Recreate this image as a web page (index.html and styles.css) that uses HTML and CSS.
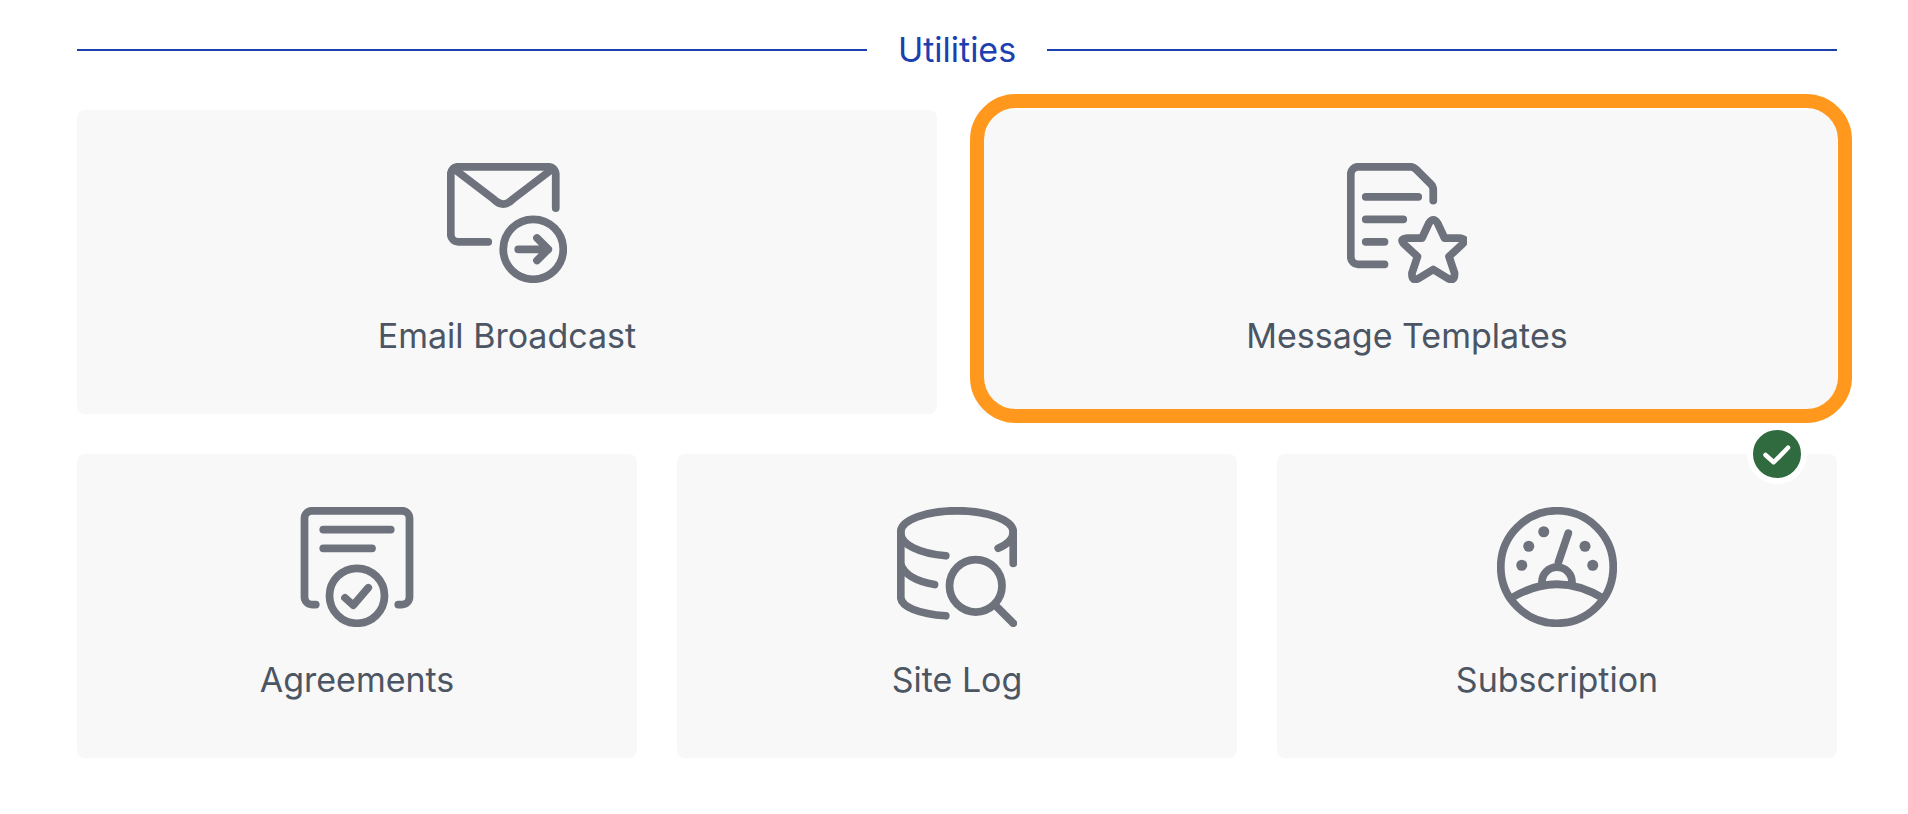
FILE: index.html
```html
<!DOCTYPE html>
<html lang="en">
<head>
    <meta charset="UTF-8">
    <meta name="viewport" content="width=device-width, initial-scale=1.0">
    <title>Utilities</title>
    <link rel="stylesheet" href="styles.css">
</head>
<body>
    <div class="container">
        <div class="section-title">
            <span class="section-line"></span>
            <h2>Utilities</h2>
            <span class="section-line"></span>
        </div>

        <div class="card-row">
            <!-- Email Broadcast -->
            <div class="card">
                <svg class="card-icon" viewBox="0 0 24 24">
                    <path d="M8.25 15.75H2.25A1.5 1.5 0 0 1 .75 14.25V2.25A1.5 1.5 0 0 1 2.25 .75H20.25A1.5 1.5 0 0 1 21.75 2.25V9"/>
                    <path d="M1.3 1.1L9.3 7.2Q11.25 9.2 13.2 7.2L21.2 1.1"/>
                    <circle cx="17.25" cy="17.25" r="6"/>
                    <path d="M14.25 17.25H20.25M18 15L20.25 17.25L18 19.5"/>
                </svg>
                <span class="card-label">Email Broadcast</span>
            </div>

            <!-- Message Templates -->
            <div class="card">
                <svg class="card-icon" viewBox="0 0 24 24">
                    <path d="M7.5 20.25H2.25A1.5 1.5 0 0 1 .75 18.75V2.25A1.5 1.5 0 0 1 2.25 .75H12.7Q13.3 .75 13.8 1.25L16.8 4.25Q17.25 4.7 17.25 5.4V7.5"/>
                    <path d="M3.75 6.75H14.25M3.75 11.25H11.25M3.75 15.75H7.5"/>
                    <path d="M16.4 12Q17.25 10.7 18.1 12L19.5 15H22.4Q24.2 15.1 23 16.3L20.4 18.7L21.5 22Q21.6 23.8 20.2 23.1L17.25 21.3L14.3 23.1Q12.9 23.8 13 22L14.1 18.7L11.5 16.3Q10.3 15.1 12.1 15H15Z"/>
                </svg>
                <span class="card-label">Message Templates</span>
                <span class="card-highlight"></span>
            </div>
        </div>

        <div class="card-row">
            <!-- Agreements -->
            <div class="card">
                <svg class="card-icon" viewBox="0 0 24 24">
                    <path d="M3.75 19.5H3A1.5 1.5 0 0 1 1.5 18V2.25A1.5 1.5 0 0 1 3 .75H21A1.5 1.5 0 0 1 22.5 2.25V18A1.5 1.5 0 0 1 21 19.5H20.25"/>
                    <path d="M5.25 4.5H18.75M5.25 8.25H15"/>
                    <circle cx="12" cy="17.75" r="5.5"/>
                    <path d="M9.6 18.15L11.25 19.65L14.25 16.15"/>
                </svg>
                <span class="card-label">Agreements</span>
            </div>

            <!-- Site Log -->
            <div class="card">
                <svg class="card-icon" viewBox="0 0 24 24">
                    <path d="M20.25 8.25C22 7.5 23.25 6.4 23.25 5C23.25 2.6 18.2 .75 12 .75S.75 2.6 .75 5V18C.75 20 4.5 21.4 9.75 21.75"/>
                    <path d="M23.25 5V11.25"/>
                    <path d="M.75 5.25C.75 7.5 4.5 9.3 9.75 9.75M.75 11.5C1.5 13.5 4 14.9 7.5 15.5"/>
                    <circle cx="15.75" cy="15.75" r="5.25"/>
                    <path d="M19.5 19.5L23.25 23.25"/>
                </svg>
                <span class="card-label">Site Log</span>
            </div>

            <!-- Subscription -->
            <div class="card">
                <svg class="card-icon" viewBox="0 0 24 24">
                    <circle cx="12" cy="12" r="11.25"/>
                    <path d="M2.7 18.3Q12 12.6 21.3 18.3"/>
                    <path d="M9 15A3 3 0 0 1 15 15"/>
                    <path d="M14.25 5.25L12.3 11"/>
                    <g class="icon-dots">
                        <circle cx="4.95" cy="11.65" r="1.1"/>
                        <circle cx="6.35" cy="7.85" r="1.1"/>
                        <circle cx="9.35" cy="4.95" r="1.1"/>
                        <circle cx="17.6" cy="7.85" r="1.1"/>
                        <circle cx="19.15" cy="11.65" r="1.1"/>
                    </g>
                </svg>
                <span class="card-label">Subscription</span>
                <span class="card-badge">
                    <svg viewBox="0 0 48 48">
                        <path d="M12.5 25L20.7 32.3L35 17.7"/>
                    </svg>
                </span>
            </div>
        </div>
    </div>
</body>
</html>
```

FILE: styles.css
```css
body {
    margin: 0;
    font-family: Inter, "Liberation Sans", sans-serif;
    background-color: #fff;
}

.container {
    display: flex;
    flex-direction: column;
    gap: 40px;
    padding: 30px 71px 56px 77px;
}

.section-title {
    display: flex;
    align-items: center;
    gap: 31px;
}

.section-title h2 {
    margin: 0;
    font-size: 34px;
    font-weight: 400;
    line-height: 40px;
    color: #1c40b0;
}

.section-line {
    flex: 1;
    height: 2px;
    background: #1c40b0;
}

.card-row {
    display: flex;
    gap: 40px;
}

.card {
    position: relative;
    flex: 1;
    height: 304px;
    display: flex;
    flex-direction: column;
    align-items: center;
    background: #f8f8f8;
    border-radius: 8px;
    box-sizing: border-box;
    padding-top: 53px;
}

.card-icon {
    display: block;
    width: 120px;
    height: 120px;
    fill: none;
    stroke: #6e727c;
    stroke-width: 1.55;
    stroke-linecap: round;
    stroke-linejoin: round;
}

.icon-dots circle {
    fill: #6e727c;
    stroke: none;
}

.card-label {
    margin-top: 33px;
    font-size: 34px;
    line-height: 40px;
    color: #4b5563;
}

.card-highlight {
    position: absolute;
    top: -16px;
    left: -7px;
    right: -15px;
    bottom: -9px;
    border: 14px solid #ff981c;
    border-radius: 46px;
}

.card-badge {
    position: absolute;
    top: -30px;
    right: 30px;
    width: 48px;
    height: 48px;
    border: 6px solid #fff;
    border-radius: 50%;
    background: #2f6b3e;
}

.card-badge svg {
    display: block;
    width: 48px;
    height: 48px;
    fill: none;
    stroke: #fff;
    stroke-width: 4.5;
    stroke-linecap: round;
    stroke-linejoin: round;
}
```
